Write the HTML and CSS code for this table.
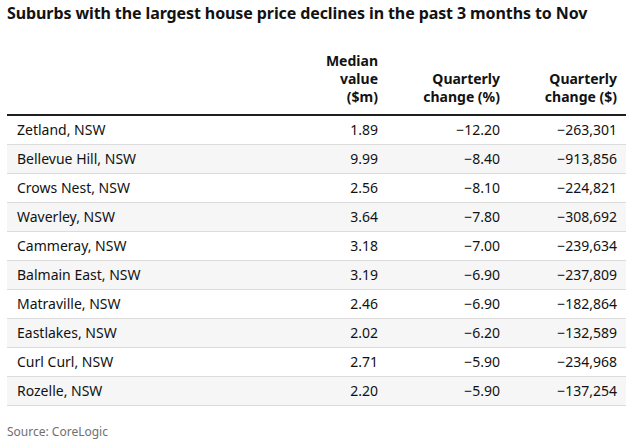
FILE: index.html
```html
<!DOCTYPE html>
<html lang="en">
<head>
<meta charset="utf-8">
<link rel="stylesheet" href="styles.css">
</head>
<body>
<div class="wrap">
  <h1 class="title">Suburbs with the largest house price declines in the past 3 months to Nov</h1>
  <table class="data">
    <colgroup>
      <col class="c-name">
      <col class="c-med">
      <col class="c-pct">
      <col class="c-dol">
    </colgroup>
    <thead>
      <tr>
        <th class="name"></th>
        <th class="num">Median<br>value<br>($m)</th>
        <th class="num">Quarterly<br>change (%)</th>
        <th class="num">Quarterly<br>change ($)</th>
      </tr>
    </thead>
    <tbody>
      <tr><td class="name">Zetland, NSW</td><td class="num">1.89</td><td class="num">−12.20</td><td class="num">−263,301</td></tr>
      <tr><td class="name">Bellevue Hill, NSW</td><td class="num">9.99</td><td class="num">−8.40</td><td class="num">−913,856</td></tr>
      <tr><td class="name">Crows Nest, NSW</td><td class="num">2.56</td><td class="num">−8.10</td><td class="num">−224,821</td></tr>
      <tr><td class="name">Waverley, NSW</td><td class="num">3.64</td><td class="num">−7.80</td><td class="num">−308,692</td></tr>
      <tr><td class="name">Cammeray, NSW</td><td class="num">3.18</td><td class="num">−7.00</td><td class="num">−239,634</td></tr>
      <tr><td class="name">Balmain East, NSW</td><td class="num">3.19</td><td class="num">−6.90</td><td class="num">−237,809</td></tr>
      <tr><td class="name">Matraville, NSW</td><td class="num">2.46</td><td class="num">−6.90</td><td class="num">−182,864</td></tr>
      <tr><td class="name">Eastlakes, NSW</td><td class="num">2.02</td><td class="num">−6.20</td><td class="num">−132,589</td></tr>
      <tr><td class="name">Curl Curl, NSW</td><td class="num">2.71</td><td class="num">−5.90</td><td class="num">−234,968</td></tr>
      <tr><td class="name">Rozelle, NSW</td><td class="num">2.20</td><td class="num">−5.90</td><td class="num">−137,254</td></tr>
    </tbody>
  </table>
  <p class="source">Source: CoreLogic</p>
</div>
</body>
</html>
```

FILE: styles.css
```css
html, body {
  margin: 0;
  padding: 0;
  background: #ffffff;
}
body {
  font-family: "Noto Sans", "Open Sans", Arial, sans-serif;
  color: #121212;
}
.wrap {
  padding: 3px 5px 0 7px;
}
.title {
  margin: 0;
  font-size: 16px;
  line-height: 20px;
  font-weight: 700;
  color: #121212;
  letter-spacing: -0.1px;
}
.data {
  width: 619px;
  border-collapse: collapse;
  margin-top: 29px;
  font-size: 14px;
  line-height: 18px;
}
.c-name { width: 303px; }
.c-med { width: 77px; }
.c-pct { width: 122px; }
.c-dol { width: 117px; }
.data th {
  font-weight: 700;
  padding: 0 9px 8px 10px;
  vertical-align: bottom;
  border-bottom: 2px solid #1f1f1f;
}
.data td {
  padding: 5px 9px 5px 10px;
  border-bottom: 1px solid #dcdcdc;
  height: 18px;
}
.data tbody tr:nth-child(even) td {
  background: #f6f6f6;
}
.name { text-align: left; }
.num { text-align: right; }
.source {
  margin: 18px 0 0;
  font-size: 12px;
  line-height: 16px;
  color: #707070;
}
```
